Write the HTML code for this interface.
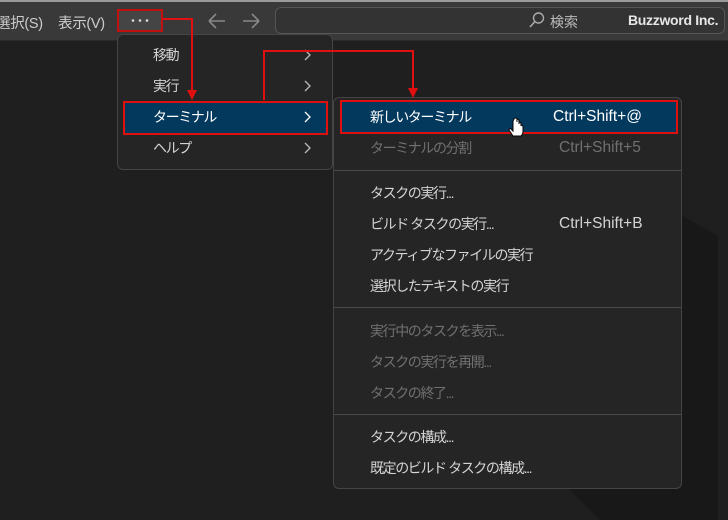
<!DOCTYPE html>
<html><head><meta charset="utf-8"><style>
*{margin:0;padding:0;box-sizing:border-box}
body{width:728px;height:520px;background:#1f1f1f;position:relative;overflow:hidden;font-family:"Liberation Sans","Noto Sans CJK JP",sans-serif;color:#ccc;font-size:14px}
.tb{position:absolute;left:0;top:0;width:728px;height:41px;background:#393939;border-top:2px solid #9a9a9a;border-bottom:1px solid #2b2b2b}
.t{position:absolute;white-space:nowrap}
.menu{position:absolute;background:#252526;border:1px solid #454545;border-radius:6px}
.it{position:absolute;white-space:nowrap;font-size:14px;color:#d4d4d4;letter-spacing:-1.4px}
.sc{position:absolute;white-space:nowrap;font-size:15.5px;color:#d4d4d4}
.dis{color:#707070}
.sep{position:absolute;height:1px;background:#4a4a4a}
.hl{position:absolute;background:#04395e;border:2px solid #e01010}
</style></head><body>
<svg style="position:absolute;left:0;top:0" width="728" height="520"><polygon points="681,215 718,236 718,520 600,520 568,488 681,488" fill="#181818"/></svg>
<div class="tb"></div>
<div class="t" style="left:-4px;top:12px;color:#ccc;letter-spacing:-0.3px;font-size:14.5px">選択(S)</div>
<div class="t" style="left:58px;top:12px;color:#ccc;letter-spacing:-0.3px;font-size:14.5px">表示(V)</div>
<div style="position:absolute;left:117px;top:9px;width:46px;height:23px;border:2px solid #c01010;background:#454545"></div>
<svg style="position:absolute;left:117px;top:9px" width="46" height="23"><circle cx="16" cy="11.5" r="1.3" fill="#ddd"/><circle cx="23" cy="11.5" r="1.3" fill="#ddd"/><circle cx="30" cy="11.5" r="1.3" fill="#ddd"/></svg>
<svg style="position:absolute;left:205px;top:10px" width="60" height="22"><path d="M4,11 H20 M4,11 L11,4 M4,11 L11,18" stroke="#888" stroke-width="1.6" fill="none"/><path d="M38,11 H54 M54,11 L47,4 M54,11 L47,18" stroke="#888" stroke-width="1.6" fill="none"/></svg>
<div style="position:absolute;left:275px;top:7px;width:450px;height:27px;border:1px solid #555;border-radius:6px;background:#333"></div>
<svg style="position:absolute;left:528px;top:11px" width="18" height="18"><circle cx="10.5" cy="7" r="5" fill="none" stroke="#aaa" stroke-width="1.4"/><line x1="7" y1="10.5" x2="2" y2="16" stroke="#aaa" stroke-width="1.6"/></svg>
<div class="t" style="left:550px;top:12px;color:#bbb">検索</div>
<div class="t" style="left:628px;top:12px;color:#e6e6e6;font-weight:bold;font-size:14px;letter-spacing:-0.3px">Buzzword Inc.</div>

<div class="menu" style="left:117px;top:34px;width:216px;height:136px"></div>
<div class="it" style="left:153px;top:45px">移動</div>
<div class="it" style="left:153px;top:76px">実行</div>
<div class="hl" style="left:123px;top:101px;width:205px;height:34px"></div>
<div class="it" style="left:153px;top:107px;color:#fff">ターミナル</div>
<div class="it" style="left:153px;top:138px">ヘルプ</div>
<svg style="position:absolute;left:0;top:0" width="340" height="170"><g fill="none" stroke="#bbb" stroke-width="1.3"><path d="M305,50 L310,55 L305,60"/><path d="M305,81 L310,86 L305,91"/><path d="M305,112 L310,117 L305,122" stroke="#fff"/><path d="M305,143 L310,148 L305,153"/></g></svg>

<div class="menu" style="left:333px;top:97px;width:349px;height:392px"></div>
<div class="hl" style="left:340px;top:100px;width:338px;height:34px"></div>
<div class="it" style="left:370px;top:107px;color:#fff">新しいターミナル</div><div class="sc" style="left:553px;top:108px;color:#fff">Ctrl+Shift+@</div>
<div class="it dis" style="left:370px;top:138px">ターミナルの分割</div><div class="sc dis" style="left:559px;top:139px">Ctrl+Shift+5</div>
<div class="sep" style="left:334px;top:170px;width:347px"></div>
<div class="it" style="left:370px;top:183px">タスクの実行...</div>
<div class="it" style="left:370px;top:214px">ビルド タスクの実行...</div><div class="sc" style="left:559px;top:215px">Ctrl+Shift+B</div>
<div class="it" style="left:370px;top:245px">アクティブなファイルの実行</div>
<div class="it" style="left:370px;top:276px">選択したテキストの実行</div>
<div class="sep" style="left:334px;top:307px;width:347px"></div>
<div class="it dis" style="left:370px;top:321px">実行中のタスクを表示...</div>
<div class="it dis" style="left:370px;top:352px">タスクの実行を再開...</div>
<div class="it dis" style="left:370px;top:383px">タスクの終了...</div>
<div class="sep" style="left:334px;top:414px;width:347px"></div>
<div class="it" style="left:370px;top:427px">タスクの構成...</div>
<div class="it" style="left:370px;top:458px">既定のビルド タスクの構成...</div>

<svg style="position:absolute;left:0;top:0" width="728" height="520">
<polyline points="163,19 192,19 192,92" fill="none" stroke="#e01010" stroke-width="2"/>
<polygon points="187,90 197,90 192,100" fill="#e01010"/>
<polyline points="264,100 264,51 413,51 413,89" fill="none" stroke="#e01010" stroke-width="2"/>
<polygon points="408,88 418,88 413,98" fill="#e01010"/>
<path d="M513,121 v10 l-2,-2 q-2,-1 -2,1 l4,6 h8 q2,-2 2,-5 v-4 q0,-2 -2,-2 v1 v-2 q0,-2 -2,-2 v2 v-3 q0,-2 -2,-2 v3 v-3 q0,-1 -1.5,-1 q-1.5,0 -1.5,1z" fill="#fff" stroke="#000" stroke-width="1"/>
</svg>
</body></html>
